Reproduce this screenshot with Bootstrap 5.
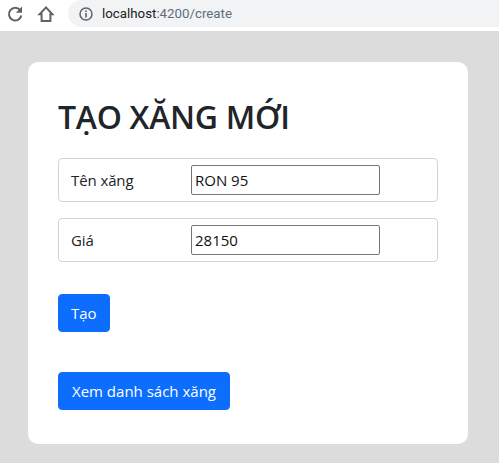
<!DOCTYPE html>
<html lang="vi">
<head>
<meta charset="utf-8">
<title>Tạo xăng mới</title>
<link href="https://cdn.jsdelivr.net/npm/bootstrap@5.3.0/dist/css/bootstrap.min.css" rel="stylesheet">
<style>
html, body { height: 100%; }
body { font-family: "Open Sans", "Noto Sans", sans-serif; background: #dcdcdc; overflow: hidden; }
.topbar { height: 31px; background: #fff; padding: 0 0 4px 6px; }
.toolicon { width: 18px; height: 18px; }
.homeslot { margin-left: 13px; }
.urlpill { margin-left: 13px; height: 27px; flex: 1; background: #f1f3f4; border-radius: 14px 0 0 14px; padding-left: 11px; font-size: 13.3px; font-family: "Roboto", sans-serif; color: #5f6d7c; }
.urlpill svg { margin-right: 9px; }
.urlhost { color: #202124; }
.panel { margin: 31px 31px 0 28px; height: 382px; background: #fff; border-radius: 10px; padding: 30px; }
.panel h1 { font-size: 32px; line-height: 50px; margin: 0 0 16px; font-weight: 600; color: #212529; letter-spacing: -0.3px; }
.fieldbox { height: 44px; border: 1px solid #ced4da; border-radius: 4px; padding-left: 12px; margin-bottom: 16px; font-size: 15px; color: #212529; }
.fieldname { width: 120px; letter-spacing: -0.1px; }
.fieldinput { width: 189px; height: 30px; border: 1px solid #767676; border-radius: 2px; padding: 0 3px; font-size: 15px; font-family: inherit; color: #111; outline: none; }
.actbtn { height: 38px; font-size: 15px; padding: 0 12px; display: inline-flex; align-items: center; border-radius: 4px; }
.actwide { padding: 0 13px; }
.gapbtn { margin-top: 32px; }
.gapbtn2 { margin-top: 40px; }
</style>
</head>
<body>
<div class="topbar d-flex align-items-center">
  <svg class="toolicon" viewBox="0 0 18 18"><path d="M14.2 5.2A6.3 6.3 0 1 0 15.4 10.6" fill="none" stroke="#5f6368" stroke-width="2"/><path d="M16 1.6v6.2H9.8z" fill="#5f6368"/></svg>
  <svg class="toolicon homeslot" viewBox="0 0 18 18"><path d="M9 2.4 2.6 9.2h2V16h8.8V9.2h2z" fill="none" stroke="#5f6368" stroke-width="2" stroke-linejoin="miter"/></svg>
  <div class="urlpill d-flex align-items-center">
    <svg width="14" height="14" viewBox="0 0 14 14"><circle cx="7" cy="7" r="6" fill="none" stroke="#5f6368" stroke-width="1.5"/><rect x="6.2" y="6" width="1.6" height="4.5" fill="#5f6368"/><rect x="6.2" y="3.4" width="1.6" height="1.6" fill="#5f6368"/></svg>
    <span><span class="urlhost">localhost</span>:4200/create</span>
  </div>
</div>
<div class="panel">
  <h1>TẠO XĂNG MỚI</h1>
  <div class="fieldbox d-flex align-items-center">
    <label class="fieldname" for="ten">Tên xăng</label>
    <input class="fieldinput" id="ten" type="text" value="RON 95">
  </div>
  <div class="fieldbox d-flex align-items-center">
    <label class="fieldname" for="gia">Giá</label>
    <input class="fieldinput" id="gia" type="text" value="28150">
  </div>
  <div class="gapbtn"><button class="btn btn-primary actbtn">Tạo</button></div>
  <div class="gapbtn2"><button class="btn btn-primary actbtn actwide">Xem danh sách xăng</button></div>
</div>
<script src="https://cdn.jsdelivr.net/npm/bootstrap@5.3.0/dist/js/bootstrap.bundle.min.js"></script>
</body>
</html>
